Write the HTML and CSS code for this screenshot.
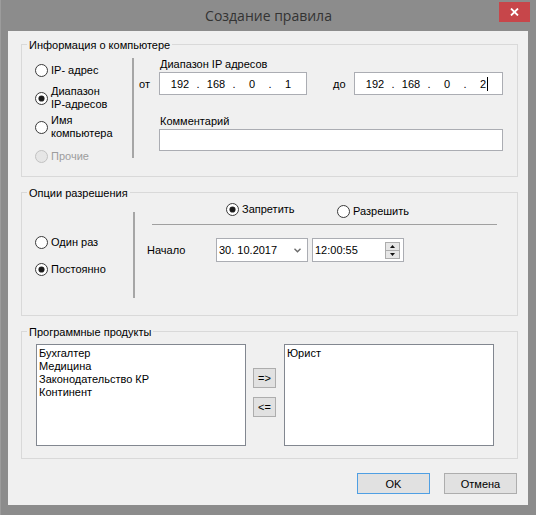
FILE: index.html
```html
<!DOCTYPE html>
<html lang="ru">
<head>
<meta charset="utf-8">
<title>Создание правила</title>
<link rel="stylesheet" href="styles.css">
</head>
<body>
<div class="window">
  <div class="titlebar">
    <div class="title">Создание правила</div>
    <div class="close">
      <svg width="9" height="8" viewBox="0 0 9 8"><path d="M1 0.5 L8 7.5 M8 0.5 L1 7.5" stroke="#fff" stroke-width="1.8" fill="none"/></svg>
    </div>
  </div>
  <div class="client">
    <div class="group g1">
      <div class="gtitle">Информация о компьютере</div>
      <div class="gbody">
        <div class="radios r-col1">
          <div class="opt o1"><span class="rb"></span><span class="lbl">IP- адрес</span></div>
          <div class="opt o2"><span class="rb on"></span><span class="lbl">Диапазон<br>IP-адресов</span></div>
          <div class="opt o3"><span class="rb"></span><span class="lbl">Имя<br>компьютера</span></div>
          <div class="opt o4 disabled"><span class="rb"></span><span class="lbl">Прочие</span></div>
        </div>
        <div class="sep sep1"></div>
        <div class="right1">
          <div class="flabel first">Диапазон IP адресов</div>
          <div class="iprow">
            <span class="ot">от</span>
            <div class="ipbox">
              <span class="oct">192</span><span class="dot">.</span><span class="oct">168</span><span class="dot">.</span><span class="oct">0</span><span class="dot">.</span><span class="oct">1</span>
            </div>
            <span class="do">до</span>
            <div class="ipbox ip2">
              <span class="oct">192</span><span class="dot">.</span><span class="oct">168</span><span class="dot">.</span><span class="oct">0</span><span class="dot">.</span><span class="oct"><span class="caret">2</span></span>
            </div>
          </div>
          <div class="flabel second">Комментарий</div>
          <div class="comment"></div>
        </div>
      </div>
    </div>

    <div class="group g2">
      <div class="gtitle">Опции разрешения</div>
      <div class="gbody">
        <div class="radios r-col2">
          <div class="opt oa"><span class="rb"></span><span class="lbl">Один раз</span></div>
          <div class="opt ob"><span class="rb on"></span><span class="lbl">Постоянно</span></div>
        </div>
        <div class="sep sep2"></div>
        <div class="right2">
          <div class="moderow">
            <div class="opt ozap"><span class="rb on"></span><span class="lbl">Запретить</span></div>
            <div class="opt oraz"><span class="rb"></span><span class="lbl">Разрешить</span></div>
          </div>
          <div class="hline"></div>
          <div class="startrow">
            <span class="nachalo">Начало</span>
            <div class="datebox">
              <span>30. 10.2017</span>
              <svg class="chev" width="7" height="5" viewBox="0 0 7 5"><path d="M0.5 0.8 L3.5 3.8 L6.5 0.8" stroke="#6a6a6a" stroke-width="1.4" fill="none"/></svg>
            </div>
            <div class="timebox">
              <span>12:00:55</span>
              <div class="spin">
                <span class="sbtn"><svg width="5" height="3" viewBox="0 0 5 3"><path d="M0 3 L2.5 0 L5 3 Z" fill="#111"/></svg></span>
                <span class="sbtn"><svg width="5" height="3" viewBox="0 0 5 3"><path d="M0 0 L2.5 3 L5 0 Z" fill="#111"/></svg></span>
              </div>
            </div>
          </div>
        </div>
      </div>
    </div>

    <div class="group g3">
      <div class="gtitle">Программные продукты</div>
      <div class="gbody prodbody">
        <div class="list">
          <div>Бухгалтер</div>
          <div>Медицина</div>
          <div>Законодательство КР</div>
          <div>Континент</div>
        </div>
        <div class="movebtns">
          <div class="mbtn">=&gt;</div>
          <div class="mbtn">&lt;=</div>
        </div>
        <div class="list list2">
          <div>Юрист</div>
        </div>
      </div>
    </div>

    <div class="btnrow">
      <div class="btn def">OK</div>
      <div class="btn">Отмена</div>
    </div>
  </div>
</div>
</body>
</html>
```
FILE: styles.css
```css
* { box-sizing: border-box; }

body {
  margin: 0;
  background: #8c8c8c;
  font-family: "Liberation Sans", Arial, sans-serif;
  font-size: 11px;
  color: #000;
}

.window {
  width: 536px;
  height: 515px;
  background: #8c8c8c;
  border-left: 1px solid #9c9c9c;
  overflow: hidden;
}

.titlebar {
  height: 31px;
  display: grid;
  grid-template-columns: 1fr auto 1fr;
  align-items: start;
}

.title {
  grid-column: 2;
  font-family: "Open Sans", "Noto Sans", sans-serif;
  font-size: 14px;
  line-height: 20px;
  padding-top: 6px;
  color: #333;
  white-space: nowrap;
}

.close {
  grid-column: 3;
  justify-self: end;
  width: 31px;
  height: 20px;
  margin: 2px 6px 0 0;
  background: #c7464a;
  display: flex;
  align-items: center;
  justify-content: center;
}

.client {
  margin-left: 7px;
  width: 520px;
  height: 474px;
  background: #f0f0f0;
  padding: 13px 0 0 13px;
}

.group {
  width: 497px;
  border: 1px solid #d9d9d9;
}
.g1 { height: 133px; }
.g2 { height: 124px; margin-top: 15px; }
.g3 { height: 128px; margin-top: 15px; }

.gtitle {
  width: max-content;
  margin: -7px 0 0 5px;
  padding: 0 2px;
  background: #f0f0f0;
  line-height: 14px;
}

.gbody {
  display: flex;
  align-items: flex-start;
  padding-left: 13px;
}

.radios {
  display: flex;
  flex-direction: column;
  flex: none;
}
.r-col1 { width: 97px; }
.r-col2 { width: 98px; }

.opt {
  display: flex;
  align-items: center;
  gap: 3px;
}
.lbl { line-height: 13px; white-space: nowrap; }

.rb {
  flex: none;
  width: 13px;
  height: 13px;
  border-radius: 50%;
  border: 1px solid #3a3a3a;
  background: #fff;
  display: flex;
  align-items: center;
  justify-content: center;
}
.rb.on::after {
  content: "";
  width: 5px;
  height: 5px;
  border-radius: 50%;
  background: #1a1a1a;
  box-shadow: 0 0 0 0.6px #333;
}
.disabled .rb { border-color: #c2c2c2; background: #e6e6e6; }
.disabled .lbl { color: #9d9d9d; }

.o1 { margin-top: 12px; }
.o2 { margin-top: 8px; }
.o3 { margin-top: 3px; }
.o4 { margin-top: 10px; }

.oa { margin-top: 36px; }
.ob { margin-top: 14px; }

.sep {
  flex: none;
  width: 2px;
  background: #a6a6a6;
}
.sep1 { margin-top: 6px; height: 100px; }
.sep2 { margin-top: 12px; height: 86px; }

.right1 { padding-left: 5px; }

.flabel { margin-left: 21px; line-height: 13px; }
.flabel.first { margin-top: 6px; }
.flabel.second { margin-top: 20px; }

.iprow {
  display: flex;
  align-items: center;
  margin-top: 1px;
}
.ot { width: 20px; }
.do { margin-left: 26px; width: 21px; }

.ipbox {
  width: 148px;
  height: 23px;
  border: 1px solid #abadb3;
  background: #fff;
  display: flex;
  align-items: center;
  padding-left: 5px;
}
.ipbox.ip2 { width: 149px; }
.oct { width: 30px; text-align: center; }
.dot { width: 6px; text-align: center; }
.caret::after {
  content: "";
  display: inline-block;
  width: 1px;
  height: 14px;
  margin-left: 1px;
  margin-right: -2px;
  background: #000;
  vertical-align: -3px;
}

.comment {
  margin: 1px 0 0 20px;
  width: 344px;
  height: 22px;
  border: 1px solid #abadb3;
  background: #fff;
}

.right2 { flex: none; }
.moderow {
  display: flex;
  align-items: flex-start;
}
.ozap { margin-left: 91px; margin-top: 3px; width: 111px; }
.oraz { margin-top: 5px; }

.hline {
  margin: 6px 0 0 17px;
  width: 345px;
  height: 1px;
  background: #a0a0a0;
}

.startrow {
  display: flex;
  align-items: center;
  margin-top: 13px;
}
.nachalo { margin-left: 12px; width: 69px; }

.datebox, .timebox {
  width: 92px;
  height: 24px;
  border: 1px solid #abadb3;
  background: #fff;
  display: flex;
  align-items: center;
  justify-content: space-between;
}
.datebox { padding: 0 6px 0 2px; }
.timebox { margin-left: 4px; padding: 0 3px 0 2px; }

.spin {
  width: 15px;
  height: 17px;
  border: 1px solid #acacac;
  background: #e6e6e6;
  display: flex;
  flex-direction: column;
}
.sbtn {
  flex: 1;
  display: flex;
  align-items: center;
  justify-content: center;
}
.sbtn + .sbtn { border-top: 1px solid #acacac; }

.prodbody { padding-left: 14px; }

.list {
  flex: none;
  width: 210px;
  height: 102px;
  margin-top: 5px;
  border: 1px solid #828790;
  background: #fff;
  padding: 2px 0 0 2px;
  line-height: 13px;
}

.movebtns {
  margin: 29px 0 0 7px;
  display: flex;
  flex-direction: column;
  gap: 9px;
}
.mbtn {
  width: 23px;
  height: 20px;
  border: 1px solid #adadad;
  background: #e1e1e1;
  display: flex;
  align-items: center;
  justify-content: center;
}
.list2 { margin-left: 8px; }

.btnrow {
  width: 496px;
  margin-top: 14px;
  display: flex;
  justify-content: flex-end;
  gap: 14px;
}
.btn {
  width: 73px;
  height: 21px;
  border: 1px solid #adadad;
  background: #e1e1e1;
  display: flex;
  align-items: center;
  justify-content: center;
}
.btn.def { border-color: #4f9fe3; }
```
